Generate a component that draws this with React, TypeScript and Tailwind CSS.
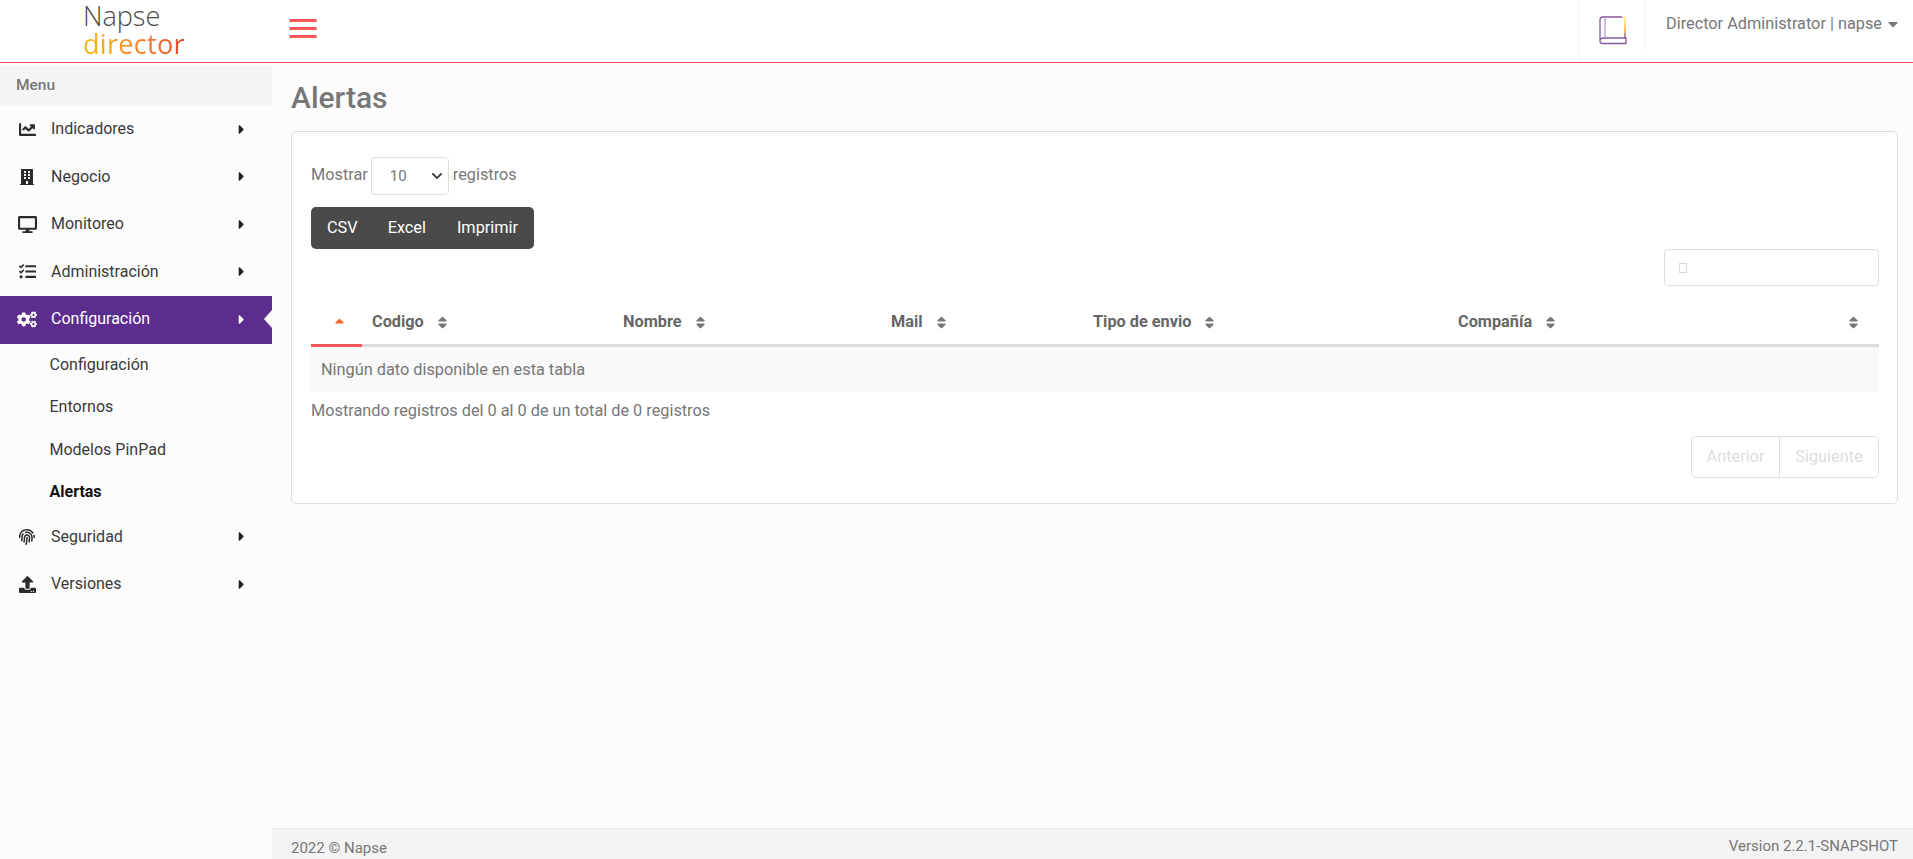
import { FaBuilding, FaCaretDown, FaCaretRight, FaChartLine, FaChevronDown, FaCogs, FaDesktop, FaFingerprint, FaSort, FaSortUp, FaTasks, FaUpload } from "react-icons/fa";
import type { IconType } from "react-icons";

interface MenuItem {
    label: string;
    icon: IconType;
    iconSize: string;
    active?: boolean;
    children?: { label: string; current?: boolean }[];
}

const menu: MenuItem[] = [
    { label: "Indicadores", icon: FaChartLine, iconSize: "text-[17px]" },
    { label: "Negocio", icon: FaBuilding, iconSize: "text-[16px]" },
    { label: "Monitoreo", icon: FaDesktop, iconSize: "text-[19px]" },
    { label: "Administración", icon: FaTasks, iconSize: "text-[17px]" },
    {
        label: "Configuración",
        icon: FaCogs,
        iconSize: "text-[21px]",
        active: true,
        children: [
            { label: "Configuración" },
            { label: "Entornos" },
            { label: "Modelos PinPad" },
            { label: "Alertas", current: true },
        ],
    },
    { label: "Seguridad", icon: FaFingerprint, iconSize: "text-[16px]" },
    { label: "Versiones", icon: FaUpload, iconSize: "text-[17px]" },
];

const columns = [
    { label: "Codigo", width: "w-[251px]" },
    { label: "Nombre", width: "w-[268px]" },
    { label: "Mail", width: "w-[202px]" },
    { label: "Tipo de envio", width: "w-[365px]" },
    { label: "Compañía", width: "w-[352px]" },
];

function Header() {
    return (
        <header className="flex h-[63px] shrink-0 items-stretch border-b border-[#f9575a] bg-white">
            <div className="flex w-[272px] flex-col pl-[83px] pt-[2px] font-['Open_Sans',sans-serif] text-[27px] font-light leading-[28px]">
                <span className="text-[#4a4a4a]">Napse</span>
                <span className="w-fit bg-gradient-to-r from-[#fdb71a] via-[#f58a2c] to-[#e8432d] bg-clip-text font-normal tracking-[0.3px] text-transparent">director</span>
            </div>
            <div className="flex flex-col gap-[5px] pl-[17px] pt-[19px]">
                <span className="h-[3px] w-[28px] rounded-sm bg-[#f9575a]" />
                <span className="h-[3px] w-[28px] rounded-sm bg-[#f9575a]" />
                <span className="h-[3px] w-[28px] rounded-sm bg-[#f9575a]" />
            </div>
            <div className="ml-auto flex items-start border-l border-[#f3f3f3] pr-[12px]">
                <div className="flex h-[52px] w-[66px] items-center justify-center border-r border-[#f3f3f3] pt-[7px]">
                    <svg width="30" height="30" viewBox="0 0 30 30" fill="none">
                        <defs>
                            <linearGradient id="bookEdge" x1="0" y1="0" x2="0" y2="1">
                                <stop offset="0" stopColor="#fde9a8" />
                                <stop offset="0.6" stopColor="#f7b52c" />
                                <stop offset="1" stopColor="#8a5a9e" />
                            </linearGradient>
                        </defs>
                        <path d="M24 2H4.500C3 2 2 3 2 4.500V26c0 1.500 1 2.500 2.500 2.500H28V23H5C3.500 23 2 24 2 26" stroke="#85589f" strokeWidth="1.300" />
                        <path d="M7 2v21" stroke="#b79cc6" strokeWidth="1.300" />
                        <path d="M24 2h3v21" stroke="url(#bookEdge)" strokeWidth="1.600" />
                    </svg>
                </div>
                <div className="flex h-[48px] items-center gap-[3px] pl-[20px] text-[16.300px] text-[#777777]">
                    <span>Director Administrator | napse</span>
                    <FaCaretDown className="text-[16px]" />
                </div>
            </div>
        </header>
    );
}

function Sidebar() {
    return (
        <aside className="w-[272px] shrink-0 pt-[3px] text-[16px] text-[#3a3a3a]">
            <div className="flex h-[40px] items-center bg-[#f5f5f5] pl-[16px] text-[15.500px] font-medium text-[#777777]">Menu</div>
            <nav>
                {menu.map((item) => (
                    <div key={item.label}>
                        <div className={`relative flex h-[47.500px] items-center pb-[1px] pl-[17px] ${item.active ? "bg-[#5c2d8c] text-white" : ""}`}>
                            <span className={`mr-[14px] flex w-[20px] shrink-0 justify-center ${item.active ? "text-white" : "text-[#2b2b2b]"}`}>
                                <item.icon className={item.iconSize} />
                            </span>
                            <span>{item.label}</span>
                            <FaCaretRight className={`absolute left-[234px] text-[15px] ${item.active ? "text-white" : "text-[#222222]"}`} />
                            {item.active && (
                                <span className="absolute right-0 top-[14px] h-0 w-0 border-y-[9px] border-r-[8px] border-y-transparent border-r-[#fcfcfc]" />
                            )}
                        </div>
                        {item.children && (
                            <div>
                                {item.children.map((child) => (
                                    <div key={child.label} className={`flex h-[42.500px] items-center pl-[49.500px] ${child.current ? "font-bold text-[#111111]" : ""}`}>
                                        {child.label}
                                    </div>
                                ))}
                            </div>
                        )}
                    </div>
                ))}
            </nav>
        </aside>
    );
}

function AlertsCard() {
    return (
        <section className="ml-[19px] mr-[15px] h-[373px] rounded-[5px] border border-[#dedede] bg-white pl-[19px] pr-[18px] pt-[25px] text-[16.300px]">
            <div className="flex h-[38px] items-center text-[#777777]">
                <span className="pb-[2px]">Mostrar</span>
                <div className="ml-[3px] mr-[4px] flex h-[38px] w-[78px] items-center justify-between rounded-[4px] border border-[#dedede] pl-[18px] pr-[5px] text-[15px]">
                    <span>10</span>
                    <FaChevronDown className="text-[12px] text-[#444444]" />
                </div>
                <span className="pb-[2px]">registros</span>
            </div>
            <div className="mt-[12px] flex h-[42px] w-[223px] items-center rounded-[5px] bg-[#4a4a4a] pl-[16px] text-white">
                <span>CSV</span>
                <span className="ml-[30px]">Excel</span>
                <span className="ml-[31px]">Imprimir</span>
            </div>
            <div className="flex justify-end">
                <div className="flex h-[37px] w-[215px] items-center rounded-[4px] border border-[#dedede] pl-[14px]">
                    <span className="h-[10px] w-[8px] border border-[#d8d8d8]" />
                </div>
            </div>
            <table className="mt-[15px] w-full table-fixed border-collapse">
                <thead>
                    <tr className="h-[44px] border-b-[3px] border-[#dddddd] text-[#666666]">
                        <th className="relative w-[51px] p-0">
                            <FaSortUp className="mx-auto mt-[4px] translate-x-[3px] text-[15px] text-[#f4672a]" />
                            <span className="absolute inset-x-0 -bottom-[3px] h-[3px] bg-[#f9575a]" />
                        </th>
                        {columns.map((col) => (
                            <th key={col.label} className={`${col.width} p-0 pl-[10px] text-left font-bold`}>
                                <span className="inline-flex items-center gap-[11px]">
                                    {col.label}
                                    <FaSort className="text-[15px] text-[#777777]" />
                                </span>
                            </th>
                        ))}
                        <th className="p-0 pr-[18px]">
                            <FaSort className="ml-auto text-[15px] text-[#777777]" />
                        </th>
                    </tr>
                </thead>
                <tbody>
                    <tr className="h-[47px] bg-[#f9f9f9] text-[#777777]">
                        <td colSpan={7} className="p-0 pl-[10px] pt-[1px]">Ningún dato disponible en esta tabla</td>
                    </tr>
                </tbody>
            </table>
            <p className="mt-[9px] leading-[20px] text-[#777777]">Mostrando registros del 0 al 0 de un total de 0 registros</p>
            <div className="mt-[15px] flex justify-end">
                <div className="flex h-[42px] w-[188px] items-center rounded-[5px] border border-[#dedede] text-[#dddddd]">
                    <span className="flex h-full w-[88px] items-center justify-center border-r border-[#dedede]">Anterior</span>
                    <span className="flex flex-1 items-center justify-center">Siguiente</span>
                </div>
            </div>
        </section>
    );
}

export default function App() {
    return (
        <div className="flex h-screen flex-col overflow-hidden bg-[#fcfcfc] font-['Roboto',sans-serif] text-[15px]">
            <Header />
            <div className="flex min-h-0 flex-1">
                <Sidebar />
                <main className="flex min-w-0 flex-1 flex-col">
                    <h1 className="h-[68px] pl-[19px] pt-[17px] text-[30px] font-medium leading-[36px] text-[#777777]">Alertas</h1>
                    <AlertsCard />
                    <footer className="mt-auto flex h-[31px] justify-between border-t border-[#ebebeb] bg-[#f3f3f3] pl-[19px] pr-[15px] text-[15px] text-[#777777]">
                        <span className="pt-[8px]">2022 © Napse</span>
                        <span className="pt-[6px]">Version 2.2.1-SNAPSHOT</span>
                    </footer>
                </main>
            </div>
        </div>
    );
}
